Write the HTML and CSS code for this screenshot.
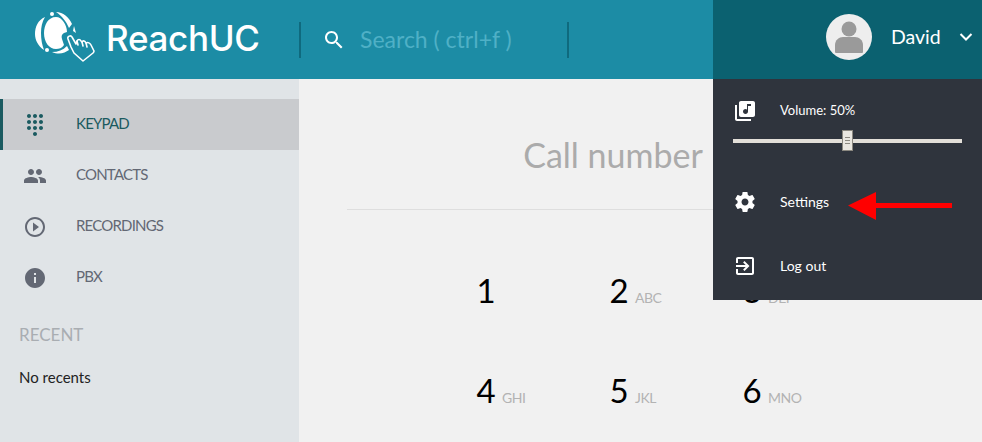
FILE: index.html
```html
<!DOCTYPE html>
<html lang="en">
<head>
  <meta charset="UTF-8" />
  <title>ReachUC</title>
  <link rel="stylesheet" href="styles.css">
</head>
<body>
  <header class="topbar">
    <div class="brand">
      <svg class="brand-mark" viewBox="0 0 70 60">
        <path class="mark-fill" d="M15 9C8 12 5 19 5 26c0 6 3 12 9 16-2-5-3-11-3-17 0-6 1-11 4-16z"/>
        <path class="mark-fill" d="M26 9C18 9 14 17 14 25c0 9 5 16 12 16 3 0 6-1 8-4l-2-6c-1-3 0-5 2-6l3-1c0-7-5-15-11-15z"/>
        <circle class="mark-fill" cx="22" cy="6" r="2"/>
        <circle class="mark-fill" cx="17" cy="42" r="2"/>
        <path class="mark-fill" d="M26 4c7 0 13 5 16 12l-3 4c-3-7-7-12-13-16zM22 44c6 0 11-2 15-6l2 4c-4 3-10 5-17 2zM44 18l2 7-3-2z"/>
        <path class="mark-hand" d="M38 31c-1-3 3-4 4-2l4 7 1-3c1-2 3-2 4 0l1 1c1-2 3-1 4 1 2-1 4 0 5 2l3 6c0 1 0 1-1 2l-10 8-9-8-3-6z"/>
        <path class="mark-hand" d="M47 33l1 4M52 34l1 4M56 35l1 4"/>
      </svg>
      <span class="brand-name">ReachUC</span>
    </div>
    <div class="search">
      <svg class="search-icon" viewBox="0 0 24 24"><path d="M15.5 14h-.79l-.28-.27C15.41 12.59 16 11.11 16 9.5 16 5.91 13.09 3 9.5 3S3 5.91 3 9.5 5.91 16 9.5 16c1.61 0 3.09-.59 4.23-1.57l.27.28v.79l5 4.99L20.49 19l-4.99-5zm-6 0C7.01 14 5 11.99 5 9.5S7.01 5 9.5 5 14 7.01 14 9.5 11.99 14 9.5 14z"/></svg>
      <span class="search-text">Search ( ctrl+f )</span>
    </div>
    <div class="user">
      <div class="avatar">
        <svg viewBox="0 0 46 46"><circle cx="23" cy="15" r="7.5"/><path d="M9 38v-7c0-5 4-8 8-8h12c4 0 8 3 8 8v7c0 1-1 1-2 1H11c-1 0-2 0-2-1z"/></svg>
      </div>
      <span class="user-name">David</span>
      <svg class="chevron" viewBox="0 0 14 10"><path d="M1.5 2l5.5 5.5L12.500 2"/></svg>
    </div>
  </header>

  <div class="content">
    <aside class="sidebar">
      <ul class="nav">
        <li class="nav-item active">
          <svg viewBox="0 0 24 24"><path d="M12 19c-1.100 0-2 .9-2 2s.9 2 2 2 2-.9 2-2-.9-2-2-2zM6 1c-1.100 0-2 .9-2 2s.9 2 2 2 2-.9 2-2-.9-2-2-2zm0 6c-1.100 0-2 .9-2 2s.9 2 2 2 2-.9 2-2-.9-2-2-2zm0 6c-1.100 0-2 .9-2 2s.9 2 2 2 2-.9 2-2-.9-2-2-2zm12-8c1.100 0 2-.9 2-2s-.9-2-2-2-2 .9-2 2 .9 2 2 2zm-6 8c-1.100 0-2 .9-2 2s.9 2 2 2 2-.9 2-2-.9-2-2-2zm6 0c-1.100 0-2 .9-2 2s.9 2 2 2 2-.9 2-2-.9-2-2-2zm0-6c-1.100 0-2 .9-2 2s.9 2 2 2 2-.9 2-2-.9-2-2-2zm-6 0c-1.100 0-2 .9-2 2s.9 2 2 2 2-.9 2-2-.9-2-2-2zm0-6c-1.100 0-2 .9-2 2s.9 2 2 2 2-.9 2-2-.9-2-2-2z"/></svg>
          <span>KEYPAD</span>
        </li>
        <li class="nav-item">
          <svg viewBox="0 0 24 24"><path d="M16 11c1.660 0 2.990-1.340 2.990-3S17.660 5 16 5c-1.660 0-3 1.340-3 3s1.340 3 3 3zm-8 0c1.660 0 2.990-1.340 2.990-3S9.660 5 8 5C6.340 5 5 6.340 5 8s1.340 3 3 3zm0 2c-2.330 0-7 1.170-7 3.500V19h14v-2.500c0-2.330-4.670-3.500-7-3.500zm8 0c-.29 0-.62.02-.97.05 1.160.84 1.970 1.970 1.970 3.450V19h6v-2.500c0-2.330-4.670-3.500-7-3.500z"/></svg>
          <span>CONTACTS</span>
        </li>
        <li class="nav-item">
          <svg viewBox="0 0 24 24"><path d="M10 16.500l6-4.500-6-4.500v9zM12 2C6.480 2 2 6.480 2 12s4.480 10 10 10 10-4.480 10-10S17.520 2 12 2zm0 18c-4.410 0-8-3.590-8-8s3.590-8 8-8 8 3.590 8 8-3.590 8-8 8z"/></svg>
          <span>RECORDINGS</span>
        </li>
        <li class="nav-item">
          <svg viewBox="0 0 24 24"><path d="M12 2C6.480 2 2 6.480 2 12s4.480 10 10 10 10-4.480 10-10S17.520 2 12 2zm1 15h-2v-6h2v6zm0-8h-2V7h2v2z"/></svg>
          <span>PBX</span>
        </li>
      </ul>
      <h2 class="recent-title">RECENT</h2>
      <p class="recent-empty">No recents</p>
    </aside>

    <main class="dial">
      <h1 class="dial-title">Call number</h1>
      <div class="keys">
        <div class="key"><span class="digit">1</span></div>
        <div class="key"><span class="digit">2</span><span class="letters">ABC</span></div>
        <div class="key"><span class="digit">3</span><span class="letters">DEF</span></div>
        <div class="key"><span class="digit">4</span><span class="letters">GHI</span></div>
        <div class="key"><span class="digit">5</span><span class="letters">JKL</span></div>
        <div class="key"><span class="digit">6</span><span class="letters">MNO</span></div>
      </div>
    </main>
  </div>

  <div class="menu">
    <div class="volume">
      <div class="menu-row volume-label">
        <svg viewBox="0 0 24 24"><path d="M20 2H8c-1.100 0-2 .9-2 2v12c0 1.100.9 2 2 2h12c1.100 0 2-.9 2-2V4c0-1.100-.9-2-2-2zm-2 5h-3v5.500c0 1.380-1.120 2.500-2.500 2.500S10 13.880 10 12.500s1.120-2.500 2.500-2.500c.57 0 1.080.19 1.500.51V5h4v2zM4 6H2v14c0 1.100.9 2 2 2h14v-2H4V6z"/></svg>
        <span>Volume: 50%</span>
      </div>
      <div class="slider">
        <div class="slider-track"></div>
        <div class="slider-thumb"><i></i><i></i><i></i></div>
        <div class="slider-track"></div>
      </div>
    </div>
    <div class="menu-row menu-link">
      <svg viewBox="0 0 24 24"><path d="M19.430 12.980c.04-.32.07-.64.07-.98s-.03-.66-.07-.98l2.110-1.650c.19-.15.24-.42.12-.64l-2-3.460c-.12-.22-.39-.3-.61-.22l-2.490 1c-.52-.4-1.080-.73-1.690-.98l-.38-2.650C14.460 2.180 14.250 2 14 2h-4c-.25 0-.46.18-.49.42l-.38 2.650c-.61.25-1.170.59-1.690.98l-2.490-1c-.23-.09-.49 0-.61.22l-2 3.460c-.13.22-.07.49.12.64l2.110 1.650c-.04.32-.07.65-.07.98s.03.66.07.98l-2.110 1.650c-.19.15-.24.42-.12.64l2 3.460c.12.22.39.3.61.22l2.490-1c.52.4 1.080.73 1.690.98l.38 2.650c.03.24.24.42.49.42h4c.25 0 .46-.18.49-.42l.38-2.650c.61-.25 1.170-.59 1.690-.98l2.490 1c.23.09.49 0 .61-.22l2-3.460c.12-.22.07-.49-.12-.64l-2.110-1.650zM12 15.500c-1.930 0-3.500-1.570-3.500-3.500s1.570-3.500 3.500-3.500 3.500 1.570 3.500 3.500-1.570 3.500-3.500 3.500z"/></svg>
      <span>Settings</span>
    </div>
    <div class="menu-row menu-link">
      <svg viewBox="0 0 24 24"><path d="M10.090 15.590L11.500 17l5-5-5-5-1.410 1.410L12.670 11H3v2h9.670l-2.580 2.590zM19 3H5c-1.110 0-2 .9-2 2v4h2V5h14v14H5v-4H3v4c0 1.100.89 2 2 2h14c1.100 0 2-.9 2-2V5c0-1.100-.9-2-2-2z"/></svg>
      <span>Log out</span>
    </div>
  </div>

  <svg class="callout" viewBox="0 0 106 30"><path d="M1 14.500L29 1v11h76v5H29v12z"/></svg>
</body>
</html>
```

FILE: styles.css
```css
* {
  box-sizing: border-box;
}

body {
  margin: 0;
  height: 442px;
  overflow: hidden;
  position: relative;
  font-family: "Lato", "Noto Sans", sans-serif;
  background-color: #f1f1f1;
  color: #000;
}

/* top bar */
.topbar {
  height: 79px;
  display: flex;
  align-items: center;
  background-color: #1c8ca5;
}

.brand {
  width: 299px;
  flex: none;
  display: flex;
  align-items: center;
  padding-left: 30px;
}

.brand-mark {
  width: 70px;
  height: 60px;
  margin-top: -3px;
  flex: none;
}

.mark-fill {
  fill: #fff;
}

.mark-hand {
  fill: #1c8ca5;
  stroke: #fff;
  stroke-width: 1.6;
  stroke-linejoin: round;
  stroke-linecap: round;
}

.brand-name {
  margin-left: 6px;
  padding-bottom: 4px;
  font-family: "Inter", sans-serif;
  font-size: 35px;
  font-weight: 500;
  letter-spacing: -0.3px;
  color: #fff;
}

.search {
  width: 270px;
  height: 36px;
  flex: none;
  display: flex;
  align-items: center;
  padding-left: 21px;
  border-left: 2px solid #0f6a7e;
  border-right: 2px solid #0f6a7e;
}

.search-icon {
  width: 24px;
  height: 24px;
  fill: #fff;
}

.search-text {
  margin-left: 14px;
  padding-bottom: 2px;
  font-size: 23px;
  color: #4fb0c6;
}

.user {
  width: 269px;
  height: 79px;
  margin-left: auto;
  display: flex;
  align-items: center;
  padding: 0 0 5px 113px;
  background-color: #0b6170;
}

.avatar {
  width: 46px;
  height: 46px;
  flex: none;
  border-radius: 50%;
  background-color: #eeeeee;
}

.avatar svg {
  display: block;
  fill: #9a9a9a;
}

.user-name {
  margin-left: 19px;
  padding-bottom: 1px;
  font-size: 19.5px;
  color: #fff;
}

.chevron {
  width: 14px;
  height: 10px;
  margin-left: 18px;
  fill: none;
  stroke: #fff;
  stroke-width: 2;
}

/* sidebar */
.content {
  height: 363px;
  display: flex;
}

.sidebar {
  width: 299px;
  flex: none;
  padding-top: 20px;
  background-color: #e0e4e7;
}

.nav {
  list-style: none;
  margin: 0;
  padding: 0;
}

.nav-item {
  height: 51px;
  display: flex;
  align-items: center;
  padding-left: 23px;
  font-size: 15px;
  letter-spacing: -0.8px;
  color: #636874;
}

.nav-item span {
  padding-bottom: 3px;
}

.nav-item svg {
  width: 24px;
  height: 24px;
  margin-right: 29px;
  fill: #636874;
}

.nav-item.active {
  padding-left: 20px;
  border-left: 3px solid #1a5a60;
  background-color: #c9cbce;
  color: #1a5a60;
}

.nav-item.active svg {
  fill: #1a5a60;
}

.recent-title {
  margin: 21px 0 0;
  padding-left: 19px;
  font-size: 17px;
  font-weight: 400;
  color: #a9adb2;
}

.recent-empty {
  margin: 23px 0 0;
  padding-left: 19px;
  font-size: 15px;
  color: #222;
}

/* dial pad */
.dial {
  width: 532px;
  margin-left: 48px;
}

.dial-title {
  height: 131px;
  margin: 0;
  padding-top: 55px;
  border-bottom: 1px solid #dedede;
  text-align: center;
  font-size: 34px;
  font-weight: 400;
  color: #ababab;
}

.keys {
  display: grid;
  grid-template-columns: repeat(3, 133px);
  row-gap: 62px;
  padding: 61px 0 0 129px;
}

.key {
  display: flex;
  align-items: baseline;
}

.digit {
  width: 20px;
  margin-right: 6px;
  font-size: 33px;
  line-height: 38px;
  text-align: center;
}

.letters {
  font-size: 14px;
  letter-spacing: -0.5px;
  color: #b3b3b3;
}

/* user menu */
.menu {
  position: absolute;
  top: 79px;
  right: 0;
  width: 269px;
  height: 221px;
  padding: 20px 20px 0;
  background-color: #2f343d;
  color: #fff;
}

.menu-row {
  display: flex;
  align-items: center;
  font-size: 14px;
}

.menu-row span {
  padding-bottom: 2px;
}

.menu-row svg {
  width: 24px;
  height: 24px;
  margin-right: 23px;
  fill: #fff;
}

.volume-label {
  font-size: 13px;
}

.slider {
  height: 21px;
  margin-top: 7px;
  display: flex;
  align-items: center;
}

.slider-track {
  flex: 1;
  height: 4px;
  background-color: #e3dfd9;
}

.slider-thumb {
  width: 11px;
  height: 21px;
  display: flex;
  flex-direction: column;
  justify-content: center;
  gap: 2px;
  padding: 0 2px;
  border: 1px solid #8b8880;
  background-color: #e9e6e0;
}

.slider-thumb i {
  height: 1px;
  background-color: #8b8880;
}

.volume {
  height: 68px;
}

.menu-link {
  height: 64px;
  padding-top: 6px;
}

/* annotation arrow */
.callout {
  position: absolute;
  top: 191px;
  left: 847px;
  width: 106px;
  height: 30px;
  fill: #ff0000;
}
```
